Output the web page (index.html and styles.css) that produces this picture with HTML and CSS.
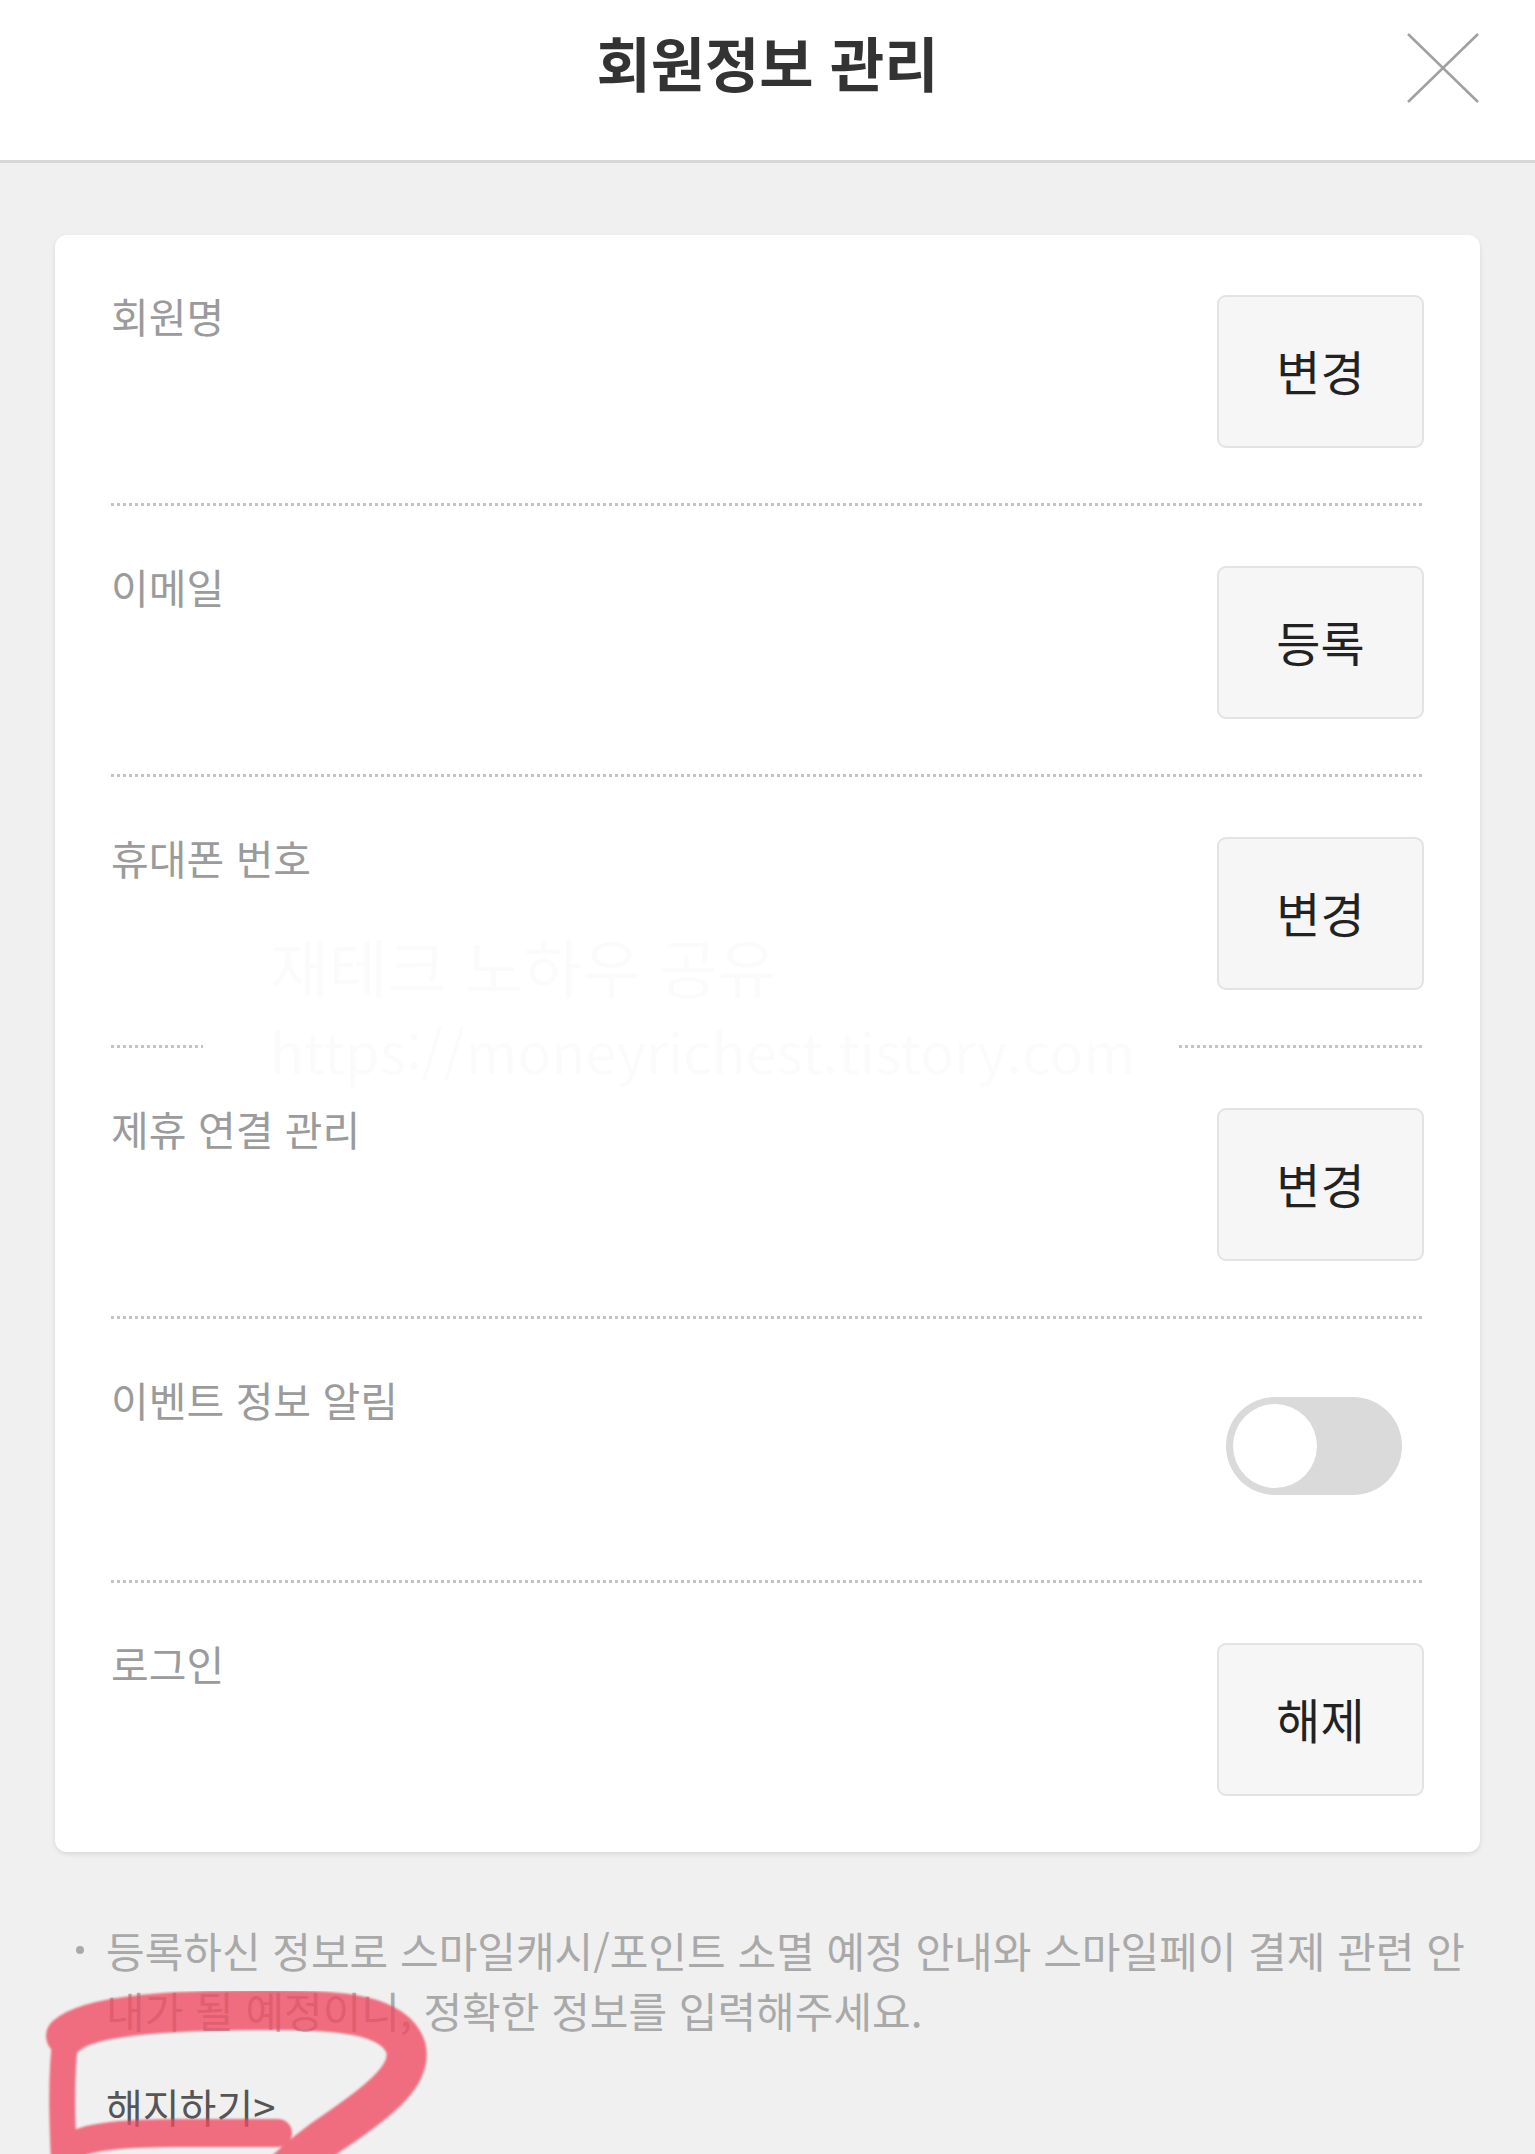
FILE: index.html
```html
<!DOCTYPE html>
<html lang="ko">
<head>
    <meta charset="UTF-8">
    <meta name="viewport" content="width=device-width, initial-scale=1.0">
    <title>회원정보 관리</title>
    <link rel="stylesheet" href="styles.css">
</head>
<body>
    <div class="page">
        <header class="top-bar">
            <h1 class="title">회원정보 관리</h1>
            <button type="button" class="close-btn" aria-label="닫기">
                <svg viewBox="0 0 72 70" width="72" height="70">
                    <line x1="1" y1="1" x2="71" y2="69" />
                    <line x1="71" y1="1" x2="1" y2="69" />
                </svg>
            </button>
        </header>

        <main class="content">
            <section class="info-card">
                <div class="info-row">
                    <div class="info-text">
                        <p class="info-label">회원명</p>
                    </div>
                    <button type="button" class="action-btn">변경</button>
                </div>

                <div class="info-row">
                    <div class="info-text">
                        <p class="info-label">이메일</p>
                    </div>
                    <button type="button" class="action-btn">등록</button>
                </div>

                <div class="info-row">
                    <div class="info-text">
                        <p class="info-label">휴대폰 번호</p>
                    </div>
                    <button type="button" class="action-btn">변경</button>
                </div>

                <div class="info-row">
                    <div class="info-text">
                        <p class="info-label">제휴 연결 관리</p>
                    </div>
                    <button type="button" class="action-btn">변경</button>
                </div>

                <div class="info-row">
                    <div class="info-text">
                        <p class="info-label">이벤트 정보 알림</p>
                    </div>
                    <div class="toggle" role="switch" aria-checked="false">
                        <span class="toggle-knob"></span>
                    </div>
                </div>

                <div class="info-row info-row-last">
                    <div class="info-text">
                        <p class="info-label">로그인</p>
                    </div>
                    <button type="button" class="action-btn">해제</button>
                </div>

                <!-- blog watermark baked into the capture -->
                <div class="watermark">
                    <p class="watermark-title">재테크 노하우 공유</p>
                    <p class="watermark-url">https://moneyrichest.tistory.com</p>
                </div>
            </section>

            <div class="notice">
                <p class="notice-item">
                    <span class="bullet"></span>
                    <span class="notice-text">등록하신 정보로 스마일캐시/포인트 소멸 예정 안내와 스마일페이 결제 관련 안내가 될 예정이니, 정확한 정보를 입력해주세요.</span>
                </p>
                <a class="cancel-link" href="#">해지하기&gt;</a>
            </div>
        </main>

        <!-- hand drawn marker circle -->
        <svg class="marker" viewBox="0 1940 480 240" width="480" height="240">
            <defs>
                <filter id="soft">
                    <feGaussianBlur stdDeviation="1.2" />
                </filter>
            </defs>
            <g opacity="0.78" filter="url(#soft)" fill="none" stroke="#ef4a5e" stroke-linecap="round" stroke-linejoin="round">
                <path d="M66 2200 C62 2130 60 2075 66 2036" stroke-width="26" />
                <path d="M66 2036 C90 2014 180 2010 273 2010 C340 2010 395 2014 406 2048 C412 2075 380 2100 341 2127 C318 2142 300 2156 270 2185" stroke-width="40" />
                <path d="M70 2148 C84 2136 130 2133 180 2133 L278 2133" stroke-width="28" />
            </g>
        </svg>
    </div>
</body>
</html>
```

FILE: styles.css
```css
body {
    margin: 0;
    padding: 0;
    background-color: #f0f0f0;
    font-family: "Noto Sans CJK KR", "Noto Sans", sans-serif;
    color: #333;
}
.page {
    position: relative;
    width: 1535px;
    height: 2154px;
    overflow: hidden;
}
.top-bar {
    display: grid;
    grid-template-columns: 1fr auto 1fr;
    height: 160px;
    background-color: #fff;
    border-bottom: 3px solid #d7d7d7;
}
.title {
    grid-column: 2;
    margin: 28px 0 0;
    font-size: 59px;
    line-height: 68px;
    font-weight: bold;
    color: #333;
    align-self: start;
}
.close-btn {
    grid-column: 3;
    justify-self: end;
    align-self: start;
    margin: 33px 56px 0 0;
    padding: 0;
    width: 72px;
    height: 70px;
    border: none;
    background: none;
}
.close-btn svg {
    display: block;
}
.close-btn line {
    stroke: #a0a0a0;
    stroke-width: 2.5;
}
.content {
    padding: 72px 55px 0;
}
.info-card {
    position: relative;
    background-color: #fff;
    border-radius: 12px;
    padding: 0 56px;
    box-shadow: 0 2px 5px rgba(0, 0, 0, 0.1);
}
.info-row {
    display: flex;
    justify-content: space-between;
    align-items: flex-start;
    padding: 60px 0 55px;
}
.info-row + .info-row {
    padding-top: 63px;
    background-image: linear-gradient(to right, #c3c3c3 50%, transparent 50%);
    background-size: 6px 3px;
    background-repeat: repeat-x;
    background-position: left top;
}
.info-row-last {
    padding-bottom: 56px;
}
.info-text {
    min-height: 146px;
}
.info-label {
    margin: 0;
    font-size: 41px;
    line-height: 40px;
    color: #9b9b9b;
}
.action-btn {
    width: 207px;
    height: 153px;
    background-color: #f6f6f6;
    border: 2px solid #e3e3e3;
    border-radius: 9px;
    font-family: inherit;
    font-size: 48px;
    color: #222;
    padding: 0 0 4px;
}
.toggle {
    display: flex;
    align-items: center;
    box-sizing: border-box;
    width: 176px;
    height: 98px;
    padding: 0 7px;
    margin: 18px 22px 0 0;
    border-radius: 49px;
    background-color: #dadada;
}
.toggle-knob {
    width: 84px;
    height: 84px;
    border-radius: 50%;
    background-color: #fff;
}
.watermark {
    position: absolute;
    left: 148px;
    top: 694px;
    pointer-events: none;
}
.watermark p {
    margin: 0;
    color: rgba(0, 0, 0, 0.014);
}
.watermark-title {
    padding-left: 67px;
    font-size: 64px;
    line-height: 72px;
}
.watermark .watermark-url {
    margin-top: 18px;
    padding-left: 67px;
    width: 909px;
    font-size: 56px;
    line-height: 62px;
    background-color: #fff;
}
.notice {
    padding-top: 68px;
}
.notice-item {
    display: flex;
    margin: 0;
    font-size: 42px;
    line-height: 60px;
    color: #a9a9a9;
}
.bullet {
    flex: none;
    width: 8px;
    height: 8px;
    margin: 26px 22px 0 21px;
    border-radius: 50%;
    background-color: #a9a9a9;
}
.notice-text {
    flex: 1;
}
.cancel-link {
    display: inline-block;
    margin: 41px 0 0 51px;
    font-size: 40px;
    line-height: 50px;
    color: #555;
    text-decoration: none;
}
.marker {
    position: absolute;
    left: 0;
    top: 1940px;
}
```
